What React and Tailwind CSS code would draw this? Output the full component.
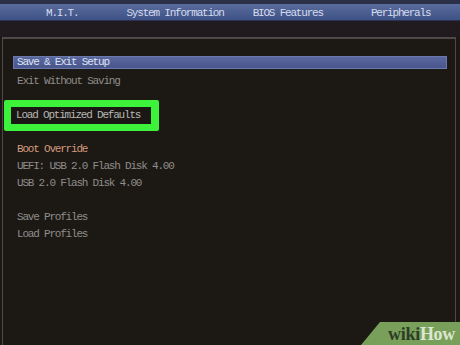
export default function App() {
  const mono = { fontFamily: '"Liberation Mono", "DejaVu Sans Mono", monospace' };

  return (
    <div className="relative w-[460px] h-[345px] overflow-hidden bg-[#1c1915]" style={mono}>
      {/* Tab bar */}
      <div className="h-[4px] bg-[#2a3048]" />
      <div className="h-[17px] bg-gradient-to-b from-[#5a6c9c] to-[#3e5285] border-b border-[#2a3356] flex items-center pt-[3px] text-[11px] tracking-[-1.2px] text-[#d6dcf0] leading-none">
        <span className="ml-[46px]">M.I.T.</span>
        <span className="ml-[48px]">System Information</span>
        <span className="ml-[29px]">BIOS Features</span>
        <span className="ml-[48px]">Peripherals</span>
      </div>
      <div className="h-[16px] bg-[#211b20]" />

      {/* Panel */}
      <div className="ml-[2px] mr-[4px] h-[400px] border-t-2 border-l border-r border-[#4e4a48] bg-[#1c1915] pt-[17px] text-[11px] tracking-[-1.2px] leading-none">
        <div className="ml-[10px] mr-[8px] h-[13px] bg-gradient-to-b from-[#5a68a0] to-[#48568c] border border-[#6a78ac] flex items-center pl-[3px] text-[#dfe3f2]">
          Save &amp; Exit Setup
        </div>
        <div className="h-[17px] flex items-center pl-[14px] text-[#8e8c8a] mt-[4px]">Exit Without Saving</div>

        <div className="mt-[10px] ml-[1px] w-[155px] h-[31px] bg-[#3cf23a] rounded-[2px] flex items-center pl-[7px]">
          <div className="w-[140px] h-[17px] bg-[#1a1714] flex items-center pl-[5px] text-[#b8b6b2]">
            Load Optimized Defaults
          </div>
        </div>

        <div className="mt-[10px] flex flex-col pl-[14px]">
          <div className="h-[17px] flex items-center text-[#d49a7c]">Boot Override</div>
          <div className="h-[17px] flex items-center text-[#8e8c8a]">UEFI: USB 2.0 Flash Disk 4.00</div>
          <div className="h-[17px] flex items-center text-[#8e8c8a]">USB 2.0 Flash Disk 4.00</div>
          <div className="h-[17px]" />
          <div className="h-[17px] flex items-center text-[#8e8c8a]">Save Profiles</div>
          <div className="h-[17px] flex items-center text-[#8e8c8a]">Load Profiles</div>
        </div>
      </div>

      {/* wikiHow badge */}
      <div
        className="absolute right-0 bottom-0 w-[99px] h-[23px] bg-[#78a05a] flex items-center justify-end pr-[5px] pt-[1px]"
        style={{ clipPath: 'polygon(19px 0, 100% 0, 100% 100%, 0 100%)' }}
      >
        <span className="text-[18px] font-bold leading-none tracking-[-0.3px]" style={{ fontFamily: '"Liberation Serif", "DejaVu Serif", serif' }}>
          <span className="text-[#2e3c26]">wiki</span>
          <span className="text-[#dce6d0]">How</span>
        </span>
      </div>
    </div>
  );
}
